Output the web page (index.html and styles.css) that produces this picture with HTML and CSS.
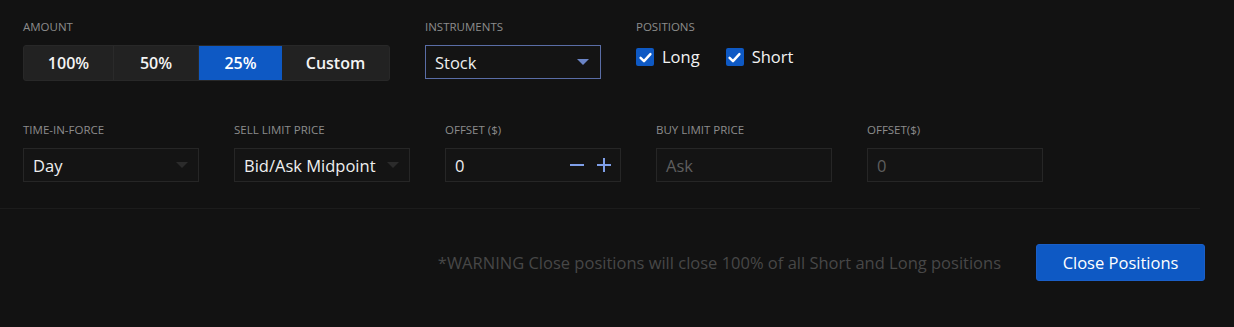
FILE: index.html
```html
<!DOCTYPE html>
<html>
<head>
<meta charset="utf-8">
<link rel="stylesheet" href="styles.css">
</head>
<body>
<div class="panel">
  <div class="row row-top">
    <div class="field field-amount">
      <div class="label">Amount</div>
      <div class="seg">
        <button class="seg-btn w100">100%</button>
        <button class="seg-btn w50">50%</button>
        <button class="seg-btn w25 active">25%</button>
        <button class="seg-btn wcustom">Custom</button>
      </div>
    </div>
    <div class="field">
      <div class="label">Instruments</div>
      <div class="select select-focus">
        <span>Stock</span>
        <span class="caret caret-blue"></span>
      </div>
    </div>
    <div class="field">
      <div class="label">Positions</div>
      <div class="checks">
        <label class="check">
          <span class="box"><svg viewBox="0 0 18 18" width="18" height="18"><path d="M3.8 9.4 L7.4 12.8 L14.2 5.4" fill="none" stroke="#fff" stroke-width="2.6" stroke-linecap="round" stroke-linejoin="round"/></svg></span>
          <span>Long</span>
        </label>
        <label class="check">
          <span class="box"><svg viewBox="0 0 18 18" width="18" height="18"><path d="M3.8 9.4 L7.4 12.8 L14.2 5.4" fill="none" stroke="#fff" stroke-width="2.6" stroke-linecap="round" stroke-linejoin="round"/></svg></span>
          <span>Short</span>
        </label>
      </div>
    </div>
  </div>

  <div class="row row-second">
    <div class="field">
      <div class="label">Time-in-force</div>
      <div class="select">
        <span>Day</span>
        <span class="caret"></span>
      </div>
    </div>
    <div class="field">
      <div class="label">Sell Limit Price</div>
      <div class="select">
        <span>Bid/Ask Midpoint</span>
        <span class="caret"></span>
      </div>
    </div>
    <div class="field">
      <div class="label">Offset ($)</div>
      <div class="select">
        <span>0</span>
        <span class="steppers">
          <svg width="14" height="14" viewBox="0 0 14 14"><rect x="0" y="6" width="14" height="2" fill="#7f9fe8"/></svg>
          <svg width="14" height="14" viewBox="0 0 14 14"><rect x="0" y="6" width="14" height="2" fill="#7f9fe8"/><rect x="6" y="0" width="2" height="14" fill="#7f9fe8"/></svg>
        </span>
      </div>
    </div>
    <div class="field">
      <div class="label">Buy Limit Price</div>
      <div class="select disabled">
        <span>Ask</span>
      </div>
    </div>
    <div class="field">
      <div class="label">Offset($)</div>
      <div class="select disabled">
        <span>0</span>
      </div>
    </div>
  </div>

  <div class="divider"></div>

  <div class="footer">
    <span class="warning">*WARNING Close positions will close 100% of all Short and Long positions</span>
    <button class="primary">Close Positions</button>
  </div>
</div>
</body>
</html>
```

FILE: styles.css
```css
* { box-sizing: border-box; }
html, body {
  margin: 0;
  background: #121212;
}
body {
  font-family: "Open Sans", "Liberation Sans", sans-serif;
  color: #f2f2f2;
  width: 1234px;
  height: 327px;
  overflow: hidden;
}
.panel {
  padding: 20px 0 0 0;
}
.row {
  display: flex;
  gap: 35px;
  padding-left: 23px;
}
.row-second {
  margin-top: 42px;
}
.field {
  display: flex;
  flex-direction: column;
  width: 176px;
}
.field-amount { width: 367px; }
.label {
  font-size: 11.5px;
  line-height: 14px;
  text-transform: uppercase;
  color: #8c8c8c;
  margin-bottom: 11px;
}
.seg {
  display: flex;
  height: 36px;
  background: #222222;
  border: 1px solid #282828;
  border-radius: 3px;
  overflow: hidden;
}
.seg-btn {
  border: 0;
  background: transparent;
  color: #f4f4f4;
  font-family: inherit;
  font-size: 16px;
  font-weight: 600;
  padding: 0;
  border-right: 1px solid #2a2a2a;
}
.seg-btn:last-child { border-right: 0; }
.w100 { width: 90px; }
.w50 { width: 85px; }
.w25 { width: 83px; border-right: 0; }
.wcustom { flex: 1; }
.seg-btn.active { background: #0e59c4; color: #fff; }

.select {
  height: 34px;
  border: 1px solid #262626;
  background: #141414;
  display: flex;
  align-items: center;
  justify-content: space-between;
  padding: 0 9px 0 9px;
  font-size: 16.5px;
  color: #efefef;
}
.select-focus {
  border-color: #5a6da6;
}
.caret {
  width: 0;
  height: 0;
  border-left: 6px solid transparent;
  border-right: 6px solid transparent;
  border-top: 6px solid #2b2b2b;
  margin-right: 1px;
}
.caret-blue { border-top-color: #6a84c6; margin-right: 2px; }
.select.disabled { color: #5e5e5e; }
.steppers {
  display: flex;
  gap: 13px;
  align-items: center;
}

.checks {
  display: flex;
  gap: 26px;
  margin-top: 1px;
}
.check {
  display: flex;
  align-items: center;
  gap: 8px;
  font-size: 16.5px;
  line-height: 22px;
  color: #f2f2f2;
  white-space: nowrap;
}
.box {
  width: 18px;
  height: 18px;
  background: #0e59c4;
  border-radius: 2px;
  display: flex;
  align-items: center;
  justify-content: center;
}
.box svg { width: 17px; height: 17px; }

.divider {
  height: 1px;
  background: #1c1c1c;
  margin: 26px 34px 0 0;
}
.footer {
  display: flex;
  justify-content: flex-end;
  align-items: center;
  gap: 35px;
  padding-right: 29px;
  margin-top: 35px;
}
.warning {
  font-size: 16.5px;
  color: #474747;
}
.primary {
  width: 169px;
  height: 37px;
  border: 1px solid #1a5fc8;
  border-radius: 3px;
  background: #0e59c4;
  color: #fff;
  font-family: inherit;
  font-size: 16.5px;
  font-weight: 500;
}
```
